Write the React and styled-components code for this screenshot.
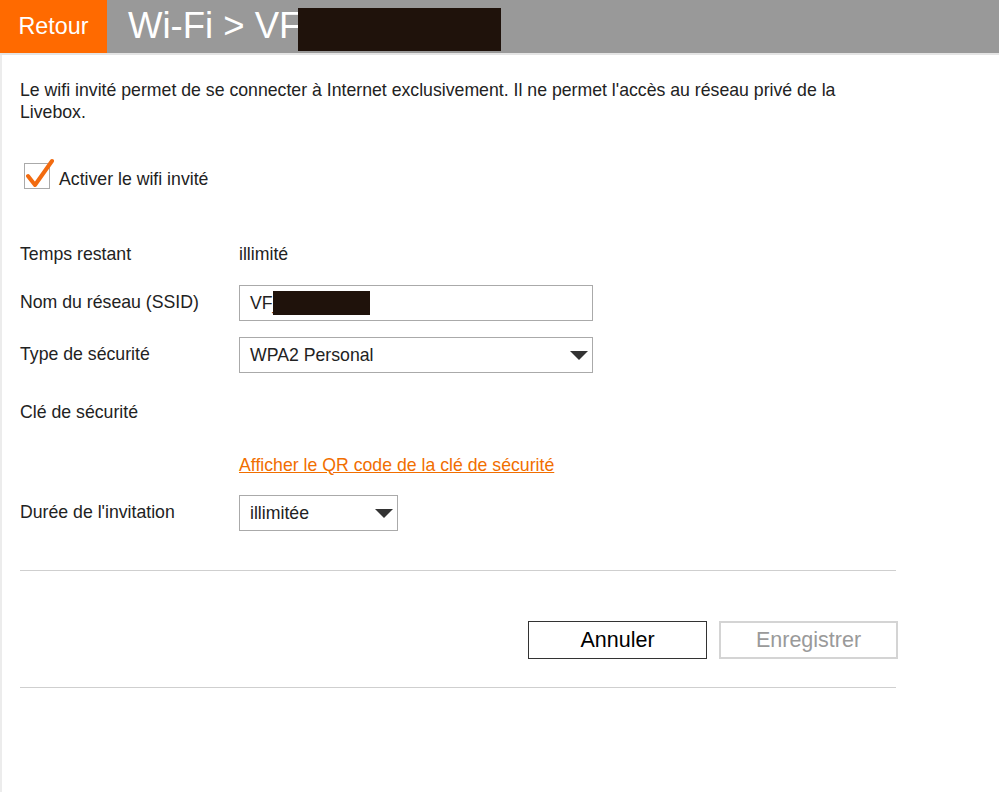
import React from "react";
import styled, { createGlobalStyle } from "styled-components";

const GlobalStyle = createGlobalStyle`
  html, body {
    margin: 0;
    padding: 0;
    background: #ffffff;
  }
  body {
    font-family: "Liberation Sans", Arial, Helvetica, sans-serif;
    color: #222222;
  }
`;

const Page = styled.div`
  min-height: 792px;
  border-left: 2px solid #ececec;
  box-sizing: border-box;
`;

// bandeau du haut
const Header = styled.header`
  display: flex;
  align-items: stretch;
  height: 53px;
  background: #999999;
  border-bottom: 2px solid #e4e4e4;
  margin-left: -2px;
`;
const BackButton = styled.button`
  width: 107px;
  border: none;
  background: #ff6a00;
  color: #ffffff;
  font-family: "Liberation Sans", Arial, sans-serif;
  font-size: 23.3px;
  padding: 0;
  cursor: pointer;
`;
const Title = styled.h1`
  display: flex;
  align-items: center;
  margin: 0 0 0 21px;
  font-size: 36.5px;
  font-weight: 400;
  color: #ffffff;
  line-height: 1;
`;
const Redacted = styled.span`
  display: inline-block;
  background: #1f120b;
  width: ${(p) => p.$w}px;
  height: ${(p) => p.$h}px;
`;

const Content = styled.main`
  width: 876px;
  padding: 24px 0 0 18px;
  font-size: 17.7px;
`;
const Intro = styled.p`
  margin: 0;
  line-height: 22px;
`;

const CheckRow = styled.label`
  display: flex;
  align-items: center;
  gap: 9px;
  margin: 38px 0 0 4px;
`;
const CheckBox = styled.span`
  position: relative;
  width: 24px;
  height: 24px;
  border: 1px solid #aaaaaa;
  margin-top: 1px;
  svg {
    position: absolute;
    left: 1px;
    top: -6px;
  }
`;
const CheckText = styled.span`
  margin-top: 8px;
`;

const Row = styled.div`
  display: flex;
  align-items: center;
  min-height: 36px;
  margin-top: ${(p) => p.$top}px;
`;
const Label = styled.div`
  width: 219px;
  flex-shrink: 0;
`;
const Value = styled.div``;

const Field = styled.div`
  display: flex;
  align-items: center;
  box-sizing: border-box;
  width: ${(p) => p.$w}px;
  height: 36px;
  border: 1px solid #aaaaaa;
  padding: 0 4px 0 10px;
  color: #222222;
  background: #ffffff;
  margin-top: 2px;
`;
const SelectText = styled.span`
  flex: 1;
`;

const Link = styled.a`
  color: #f16e00;
  text-decoration: underline;
  cursor: pointer;
`;

const Divider = styled.hr`
  border: none;
  border-top: 1px solid #cfcfcf;
  margin: ${(p) => p.$top}px 0 0;
`;

const Actions = styled.div`
  display: flex;
  justify-content: flex-end;
  gap: 12px;
  margin-top: 50px;
  margin-right: -2px;
`;
const ActionButton = styled.button`
  width: 179px;
  height: 38px;
  box-sizing: border-box;
  background: #ffffff;
  font-family: "Liberation Sans", Arial, sans-serif;
  font-size: 21.5px;
  color: ${(p) => (p.disabled ? "#9a9a9a" : "#000000")};
  border: ${(p) => (p.disabled ? "2px solid #d4d4d4" : "1px solid #333333")};
  padding: 0;
`;

const Caret = () => (
  <svg width="18" height="9" viewBox="0 0 18 9">
    <path d="M0 0 H18 L9 9 Z" fill="#333333" />
  </svg>
);

const Check = () => (
  <svg width="28" height="30" viewBox="0 0 28 30">
    <path
      d="M2 18 L9 27 L26 3"
      fill="none"
      stroke="#f26b10"
      strokeWidth="4"
      strokeLinecap="round"
      strokeLinejoin="round"
    />
  </svg>
);

export default function App() {
  return (
    <Page>
      <GlobalStyle />
      <Header>
        <BackButton>Retour</BackButton>
        <Title>
          Wi-Fi &gt; VF_
          <Redacted $w={203} $h={43} style={{ marginLeft: -24, marginTop: 6 }} />
        </Title>
      </Header>
      <Content>
        <Intro>
          Le wifi invité permet de se connecter à Internet exclusivement. Il ne
          permet l'accès au réseau privé de la Livebox.
        </Intro>

        <CheckRow>
          <CheckBox>
            <Check />
          </CheckBox>
          <CheckText>Activer le wifi invité</CheckText>
        </CheckRow>

        <Row $top={46}>
          <Label>Temps restant</Label>
          <Value>illimité</Value>
        </Row>
        <Row $top={11}>
          <Label>Nom du réseau (SSID)</Label>
          <Field $w={354}>
            VF_
            <Redacted $w={97} $h={24} style={{ marginLeft: -9 }} />
          </Field>
        </Row>
        <Row $top={14}>
          <Label>Type de sécurité</Label>
          <Field $w={354}>
            <SelectText>WPA2 Personal</SelectText>
            <Caret />
          </Field>
        </Row>
        <Row $top={21}>
          <Label>Clé de sécurité</Label>
        </Row>
        <Row $top={17}>
          <Label />
          <Link>Afficher le QR code de la clé de sécurité</Link>
        </Row>
        <Row $top={10}>
          <Label>Durée de l'invitation</Label>
          <Field $w={159}>
            <SelectText>illimitée</SelectText>
            <Caret />
          </Field>
        </Row>

        <Divider $top={39} />
        <Actions>
          <ActionButton>Annuler</ActionButton>
          <ActionButton disabled>Enregistrer</ActionButton>
        </Actions>
        <Divider $top={28} />
      </Content>
    </Page>
  );
}
